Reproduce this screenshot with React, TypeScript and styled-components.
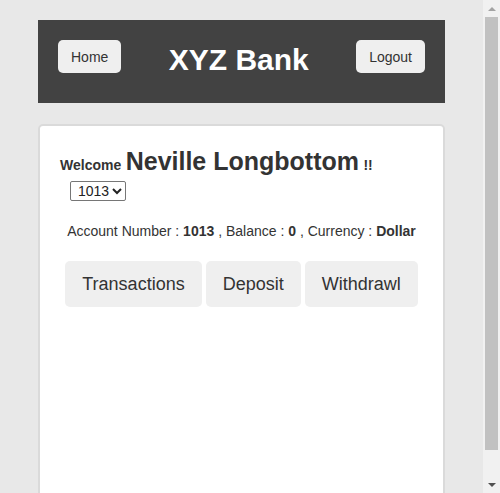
import React from "react";
import styled, { createGlobalStyle } from "styled-components";

const Global = createGlobalStyle`
  html, body { margin: 0; padding: 0; }
  body {
    background: #e8e8e8;
    font-family: "Liberation Sans", Arial, sans-serif;
    color: #333;
  }
  * { box-sizing: border-box; }
`;

const Viewport = styled.div`
  padding-right: 17px;
`;

const Page = styled.div`
  width: 407px;
  margin: 20px auto 19px;
`;

const Header = styled.header`
  display: flex;
  justify-content: space-between;
  align-items: flex-start;
  background: #424242;
  padding: 20px 20px 23px;
`;

const NavButton = styled.button`
  height: 33px;
  padding: 0 13px;
  border: none;
  border-radius: 5px;
  background: #efefef;
  color: #333;
  font-family: "Liberation Sans", Arial, sans-serif;
  font-size: 14px;
  cursor: pointer;
`;

const Title = styled.h1`
  margin: 0;
  color: #fff;
  font-size: 30px;
  line-height: 40px;
  font-weight: bold;
`;

const Card = styled.main`
  margin-top: 21px;
  min-height: 380px;
  background: #fff;
  border: 2px solid #dadada;
  border-radius: 5px;
  padding: 20px;
`;

const Welcome = styled.div`
  font-weight: bold;
  line-height: 31px;
`;

const Small = styled.span`
  font-size: 14px;
`;

const Name = styled.span`
  font-size: 25px;
`;

const AccountSelect = styled.select`
  margin-left: 10px;
  height: 20px;
  width: 56px;
  font-family: "Liberation Sans", Arial, sans-serif;
  font-size: 14px;
  color: #222;
  border: 1px solid #767676;
  border-radius: 2px;
  background: #fff;
  padding: 0 0 0 3px;
`;

const Info = styled.p`
  margin: 22px 0 0;
  text-align: center;
  font-size: 14px;
  line-height: 16px;
  color: #333;
`;

const Actions = styled.div`
  display: flex;
  justify-content: center;
  gap: 4px;
  margin-top: 22px;
`;

const ActionButton = styled.button`
  height: 46px;
  padding: 0 17px;
  border: none;
  border-radius: 5px;
  background: #efefef;
  color: #333;
  font-family: "Liberation Sans", Arial, sans-serif;
  font-size: 18px;
  cursor: pointer;
`;

const ScrollBar = styled.div`
  position: fixed;
  top: 0;
  right: 0;
  width: 17px;
  height: 100vh;
  background: #f1f1f1;
  display: flex;
  flex-direction: column;
  align-items: center;
`;

const Arrow = styled.div<{ $dir: "up" | "down"; $color: string }>`
  height: 17px;
  width: 17px;
  display: flex;
  align-items: center;
  justify-content: center;
  &::after {
    content: "";
    width: 0;
    height: 0;
    border-left: 4px solid transparent;
    border-right: 4px solid transparent;
    ${(p) =>
      p.$dir === "up"
        ? `border-bottom: 4px solid ${p.$color};`
        : `border-top: 4px solid ${p.$color};`}
  }
`;

const Thumb = styled.div`
  width: 13px;
  height: 433px;
  background: #c1c1c1;
`;

const Spacer = styled.div`
  flex: 1;
`;

export default function App() {
  return (
    <>
      <Global />
      <Viewport>
        <Page>
          <Header>
            <NavButton>Home</NavButton>
            <Title>XYZ Bank</Title>
            <NavButton>Logout</NavButton>
          </Header>
          <Card>
            <Welcome>
              <Small>Welcome</Small> <Name>Neville Longbottom</Name>{" "}
              <Small>!!</Small>
            </Welcome>
            <AccountSelect defaultValue="1013">
              <option value="1013">1013</option>
            </AccountSelect>
            <Info>
              Account Number : <b>1013</b> , Balance : <b>0</b> , Currency :{" "}
              <b>Dollar</b>
            </Info>
            <Actions>
              <ActionButton>Transactions</ActionButton>
              <ActionButton>Deposit</ActionButton>
              <ActionButton>Withdrawl</ActionButton>
            </Actions>
          </Card>
        </Page>
      </Viewport>
      <ScrollBar>
        <Arrow $dir="up" $color="#a3a3a3" />
        <Thumb />
        <Spacer />
        <Arrow $dir="down" $color="#505050" />
      </ScrollBar>
    </>
  );
}
